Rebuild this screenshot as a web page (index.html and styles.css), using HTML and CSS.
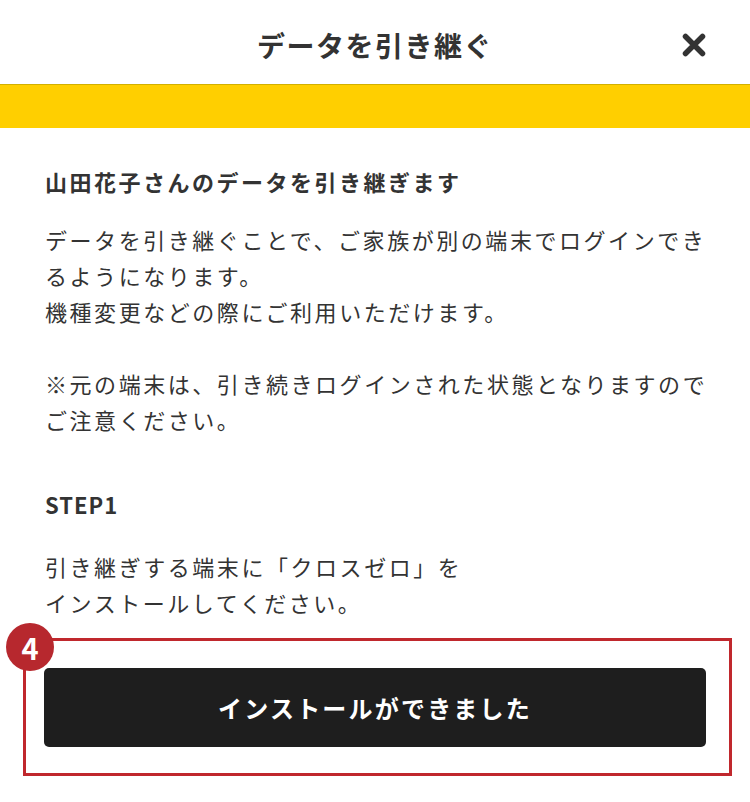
FILE: index.html
```html
<!DOCTYPE html>
<html lang="ja">
<head>
<meta charset="utf-8">
<title>データを引き継ぐ</title>
<link rel="stylesheet" href="styles.css">
</head>
<body>
<div class="page">
  <header class="header">
    <span></span>
    <h1 class="title">データを引き継ぐ</h1>
    <button class="close" aria-label="閉じる">
      <svg width="24" height="24" viewBox="0 0 24 24"><path d="M3.5 3.5 L20.5 20.5 M20.5 3.5 L3.5 20.5" stroke="#333" stroke-width="5.5" stroke-linecap="round" fill="none"/></svg>
    </button>
  </header>
  <div class="bar"></div>
  <main class="content">
    <h2 class="heading">山田花子さんのデータを引き継ぎます</h2>
    <p class="text">データを引き継ぐことで、ご家族が別の端末でログインできるようになります。<br>機種変更などの際にご利用いただけます。<br><br>※元の端末は、引き続きログインされた状態となりますのでご注意ください。</p>
    <h3 class="step">STEP1</h3>
    <p class="text step-text">引き継ぎする端末に「クロスゼロ」を<br>インストールしてください。</p>
  </main>
  <div class="highlight">
    <span class="badge">4</span>
    <button class="primary">インストールができました</button>
  </div>
</div>
</body>
</html>
```
FILE: styles.css
```css
* { box-sizing: border-box; }
html, body { margin: 0; padding: 0; background: #fff; }
body {
  font-family: "Noto Sans CJK JP", "Noto Sans", sans-serif;
  color: #333;
}
.page { width: 750px; }
.header {
  height: 84px;
  display: grid;
  grid-template-columns: 1fr auto 1fr;
  align-items: center;
}
.title {
  margin: 0;
  font-size: 28px;
  font-weight: 700;
  letter-spacing: 1.5px;
  color: #333;
  line-height: 1;
  padding-top: 6px;
}
.close {
  justify-self: end;
  margin-right: 44px;
  margin-top: 6px;
  border: 0;
  background: none;
  padding: 0;
  width: 24px;
  height: 24px;
  display: flex;
}
.bar {
  height: 44px;
  background: #ffcf00;
  border-top: 1px solid #d2b000;
}
.content { padding: 0 40px 0 45px; }
.heading {
  margin: 35px 0 0;
  font-size: 22px;
  line-height: 36px;
  font-weight: 700;
  letter-spacing: 2.5px;
}
.text {
  margin: 22px 0 0;
  font-size: 22px;
  line-height: 36px;
  font-weight: 400;
  letter-spacing: 2.55px;
}
.step {
  margin: 49px 0 0;
  font-size: 22px;
  line-height: 36px;
  font-weight: 700;
  letter-spacing: 1px;
}
.step-text { margin-top: 26px; }
.highlight {
  position: relative;
  margin: 18px 0 0 23px;
  width: 709px;
  border: 3px solid #c0282d;
  padding: 27px 23px 26px 18px;
}
.badge {
  position: absolute;
  left: -20px;
  top: -18px;
  width: 48px;
  height: 48px;
  border-radius: 50%;
  background: #b7282e;
  color: #fff;
  font-size: 29px;
  font-weight: 700;
  display: flex;
  align-items: center;
  justify-content: center;
  line-height: 1;
}
.primary {
  display: block;
  width: 100%;
  height: 79px;
  border: 0;
  border-radius: 5px;
  background: #1e1e1e;
  color: #fff;
  font-family: inherit;
  font-size: 24px;
  font-weight: 700;
  letter-spacing: 2.2px;
}
```
